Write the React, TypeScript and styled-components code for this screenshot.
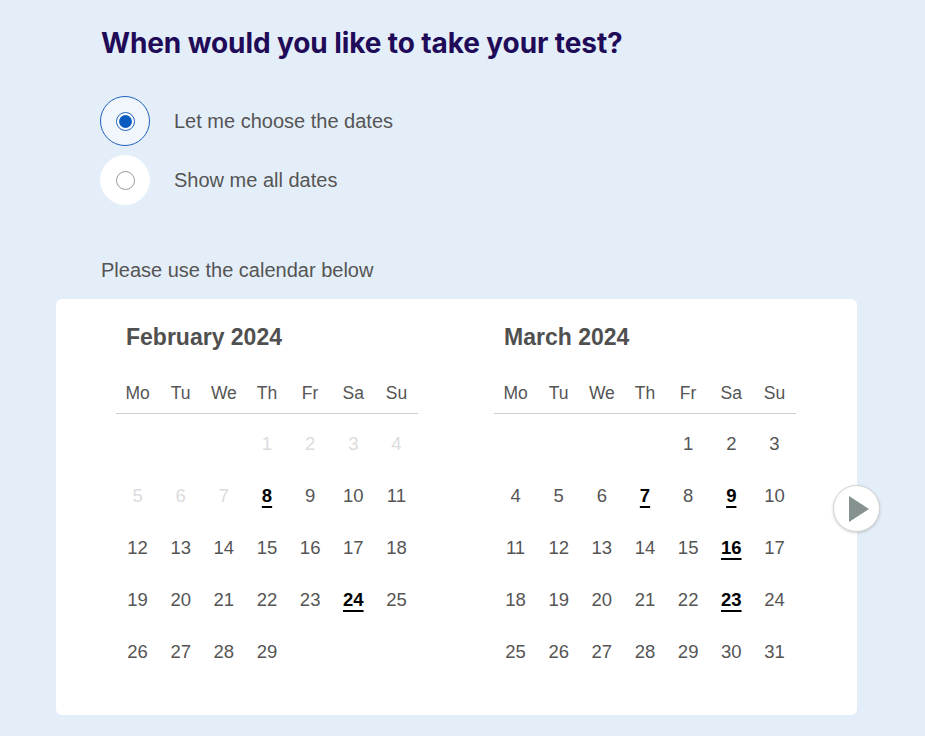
import React, { useState } from "react";
import styled, { createGlobalStyle } from "styled-components";

const GlobalStyle = createGlobalStyle`
  html, body {
    margin: 0;
    padding: 0;
    background: #e4eef8;
  }
  body {
    font-family: "Liberation Sans", Arial, sans-serif;
    color: #555;
  }
`;

const Page = styled.div`
  width: 925px;
  min-height: 736px;
  background: #e4eef8;
  padding-top: 25px;
  box-sizing: border-box;
`;

const Section = styled.div`
  padding-left: 101px;
`;

const Heading = styled.h1`
  margin: 0;
  font-family: Inter, "Liberation Sans", sans-serif;
  font-weight: 700;
  font-size: 28px;
  line-height: 36px;
  color: #1f0b58;
  letter-spacing: -0.1px;
`;

const RadioGroup = styled.div`
  display: flex;
  flex-direction: column;
  gap: 9px;
  margin-top: 35px;
  margin-left: -1px;
`;

const RadioRow = styled.label`
  display: flex;
  align-items: center;
  gap: 24px;
  cursor: pointer;
  font-size: 20px;
  color: #555;
`;

const RadioHalo = styled.span<{ $checked: boolean }>`
  width: 50px;
  height: 50px;
  box-sizing: border-box;
  border-radius: 50%;
  display: flex;
  align-items: center;
  justify-content: center;
  background: ${(p) => (p.$checked ? "#f0f6fc" : "#ffffff")};
  border: 1px solid ${(p) => (p.$checked ? "#1d62bd" : "#ffffff")};
`;

const RadioInput = styled.input`
  appearance: none;
  margin: 0;
  width: 19px;
  height: 19px;
  border-radius: 50%;
  border: 1px solid #9a9a9a;
  background: #fff;
  display: grid;
  place-items: center;
  cursor: pointer;

  &:checked {
    border-color: #1d62bd;
  }
  &:checked::before {
    content: "";
    width: 13px;
    height: 13px;
    border-radius: 50%;
    background: #0b5cc0;
  }
`;

const Hint = styled.p`
  margin: 51px 0 0;
  font-size: 20px;
  line-height: 28px;
  color: #555;
`;

const CardWrap = styled.div`
  position: relative;
  margin: 15px 0 0 56px;
  width: 801px;
`;

const Card = styled.div`
  background: #fff;
  border-radius: 6px;
  padding: 24px 61px 37px 60px;
  display: flex;
  gap: 76px;
`;

const Month = styled.div`
  width: 302px;
`;

const MonthTitle = styled.h2`
  margin: 0 0 0 10px;
  font-size: 23px;
  line-height: 28px;
  font-weight: 700;
  color: #505050;
`;

const WeekHead = styled.div`
  display: grid;
  grid-template-columns: repeat(7, 1fr);
  margin-top: 22px;
  height: 40px;
  align-items: center;
  border-bottom: 1px solid #cfcfcf;
`;

const WeekDay = styled.span`
  text-align: center;
  font-size: 17.5px;
  color: #555;
`;

const Days = styled.div`
  display: grid;
  grid-template-columns: repeat(7, 1fr);
  grid-auto-rows: 52px;
  padding-top: 4px;
`;

const Day = styled.span<{ $state: "off" | "on" | "free" }>`
  display: flex;
  align-items: center;
  justify-content: center;
  font-size: 18.5px;
  color: ${(p) => (p.$state === "off" ? "#dadcde" : p.$state === "free" ? "#000" : "#555")};
  font-weight: ${(p) => (p.$state === "free" ? 700 : 400)};
  text-decoration: ${(p) => (p.$state === "free" ? "underline" : "none")};
  text-decoration-thickness: 2px;
  text-underline-offset: 4px;
  cursor: ${(p) => (p.$state === "free" ? "pointer" : "default")};
`;

const NextButton = styled.button`
  position: absolute;
  right: -23px;
  top: 186px;
  width: 47px;
  height: 47px;
  border-radius: 50%;
  border: 1px solid #d4d4d4;
  background: #fff;
  box-shadow: 0 1px 3px rgba(0, 0, 0, 0.18);
  padding: 0 0 0 5px;
  display: flex;
  align-items: center;
  justify-content: center;
  cursor: pointer;
`;

type MonthData = {
  title: string;
  offset: number;
  length: number;
  firstOpen: number;
  free: number[];
};

const months: MonthData[] = [
  { title: "February 2024", offset: 3, length: 29, firstOpen: 8, free: [8, 24] },
  { title: "March 2024", offset: 4, length: 31, firstOpen: 1, free: [7, 9, 16, 23] },
];

const weekDays = ["Mo", "Tu", "We", "Th", "Fr", "Sa", "Su"];

const MonthView = ({ month }: { month: MonthData }) => {
  const days = Array.from({ length: month.length }, (_, i) => i + 1);
  return (
    <Month>
      <MonthTitle>{month.title}</MonthTitle>
      <WeekHead>
        {weekDays.map((d) => (
          <WeekDay key={d}>{d}</WeekDay>
        ))}
      </WeekHead>
      <Days>
        {Array.from({ length: month.offset }, (_, i) => (
          <span key={`blank-${i}`} />
        ))}
        {days.map((d) => (
          <Day
            key={d}
            $state={d < month.firstOpen ? "off" : month.free.includes(d) ? "free" : "on"}
          >
            {d}
          </Day>
        ))}
      </Days>
    </Month>
  );
};

const App = () => {
  const [mode, setMode] = useState("choose");
  const options = [
    { id: "choose", label: "Let me choose the dates" },
    { id: "all", label: "Show me all dates" },
  ];

  return (
    <>
      <GlobalStyle />
      <Page>
        <Section>
          <Heading>When would you like to take your test?</Heading>
          <RadioGroup>
            {options.map((o) => (
              <RadioRow key={o.id}>
                <RadioHalo $checked={mode === o.id}>
                  <RadioInput
                    type="radio"
                    name="mode"
                    checked={mode === o.id}
                    onChange={() => setMode(o.id)}
                  />
                </RadioHalo>
                {o.label}
              </RadioRow>
            ))}
          </RadioGroup>
          <Hint>Please use the calendar below</Hint>
        </Section>
        <CardWrap>
          <Card>
            {months.map((m) => (
              <MonthView key={m.title} month={m} />
            ))}
          </Card>
          <NextButton aria-label="Next months">
            <svg width="20" height="26" viewBox="0 0 20 26">
              <path d="M0 0 L20 13 L0 26 Z" fill="#859290" />
            </svg>
          </NextButton>
        </CardWrap>
      </Page>
    </>
  );
};

export default App;
